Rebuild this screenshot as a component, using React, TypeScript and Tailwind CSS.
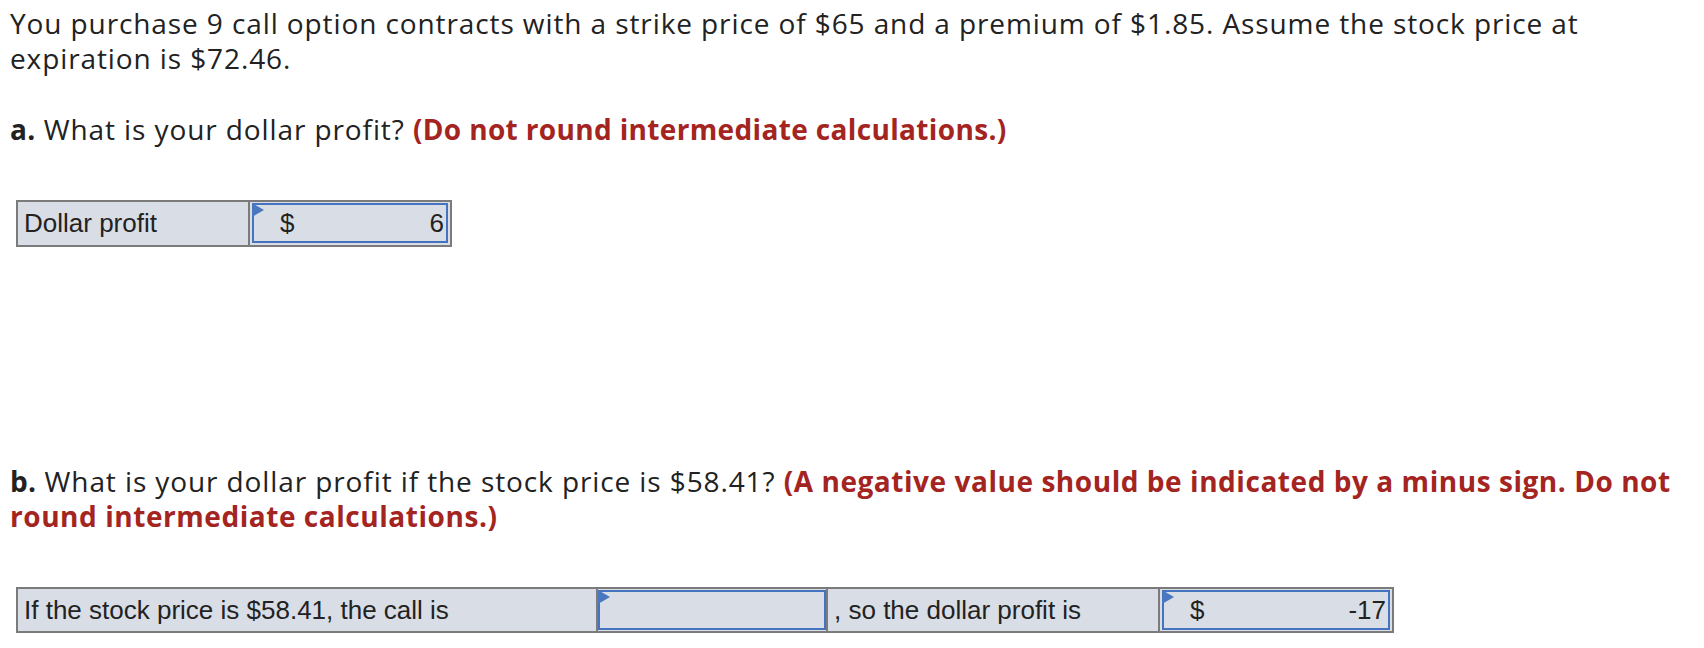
const body = "font-['Open_Sans',sans-serif] text-[28px] leading-[35px] tracking-[0.9px] text-[#222]";
const strong = "font-bold tracking-[0.35px]";
const cellFont = "font-['Liberation_Sans',Arial,sans-serif] text-[26px] tracking-normal text-[#222]";

function Flag() {
  return (
    <svg className="absolute -left-[2px] -top-[2px]" width="12" height="14" viewBox="0 0 12 14">
      <polygon points="0,0 12,7 0,14" fill="#4a78c0" />
    </svg>
  );
}

function InputBox({ dollar, value }: { dollar?: boolean; value?: string }) {
  return (
    <div className="relative flex-1 flex items-center border-2 border-[#4673c0] bg-[#d9dde5]">
      <Flag />
      {dollar && <span className={`${cellFont} pl-[26px]`}>$</span>}
      <span className={`${cellFont} ml-auto pr-[2px]`}>{value}</span>
    </div>
  );
}

function Label({ text, width }: { text: string; width: string }) {
  return (
    <div className={`${width} shrink-0 flex items-center px-[6px] border-r-2 border-[#7b7b7b] ${cellFont}`}>
      {text}
    </div>
  );
}

export default function App() {
  return (
    <div className="bg-white min-h-screen w-[1704px] h-[648px] pl-[10px] pt-[6px]">
      <p className={body}>
        You purchase 9 call option contracts with a strike price of $65 and a premium of $1.85. Assume the stock price at
        <br />
        expiration is $72.46.
      </p>

      <p className={`${body} mt-[36px]`}>
        <span className={strong}>a.</span> What is your dollar profit?{" "}
        <span className={`${strong} text-[#a4241f]`}>(Do not round intermediate calculations.)</span>
      </p>

      <div className="mt-[53px] ml-[6px] flex w-[436px] h-[47px] border-2 border-[#7b7b7b] bg-[#d9dde5]">
        <Label text="Dollar profit" width="w-[232px]" />
        <div className="flex-1 flex px-[2px] pt-[1px] pb-[2px]">
          <InputBox dollar value="6" />
        </div>
      </div>

      <p className={`${body} mt-[217px]`}>
        <span className={strong}>b.</span> What is your dollar profit if the stock price is $58.41?{" "}
        <span className={`${strong} tracking-[0.55px] text-[#a4241f]`}>
          (A negative value should be indicated by a minus sign. Do not
          <br />
          round intermediate calculations.)
        </span>
      </p>

      <div className="mt-[53px] ml-[6px] flex w-[1378px] h-[46px] border-2 border-[#7b7b7b] bg-[#d9dde5]">
        <Label text="If the stock price is $58.41, the call is" width="w-[580px]" />
        <div className="w-[230px] shrink-0 flex border-r-2 border-[#7b7b7b] py-[1px]">
          <InputBox />
        </div>
        <Label text=", so the dollar profit is" width="w-[332px]" />
        <div className="flex-1 flex px-[2px] py-[1px]">
          <InputBox dollar value="-17" />
        </div>
      </div>
    </div>
  );
}
